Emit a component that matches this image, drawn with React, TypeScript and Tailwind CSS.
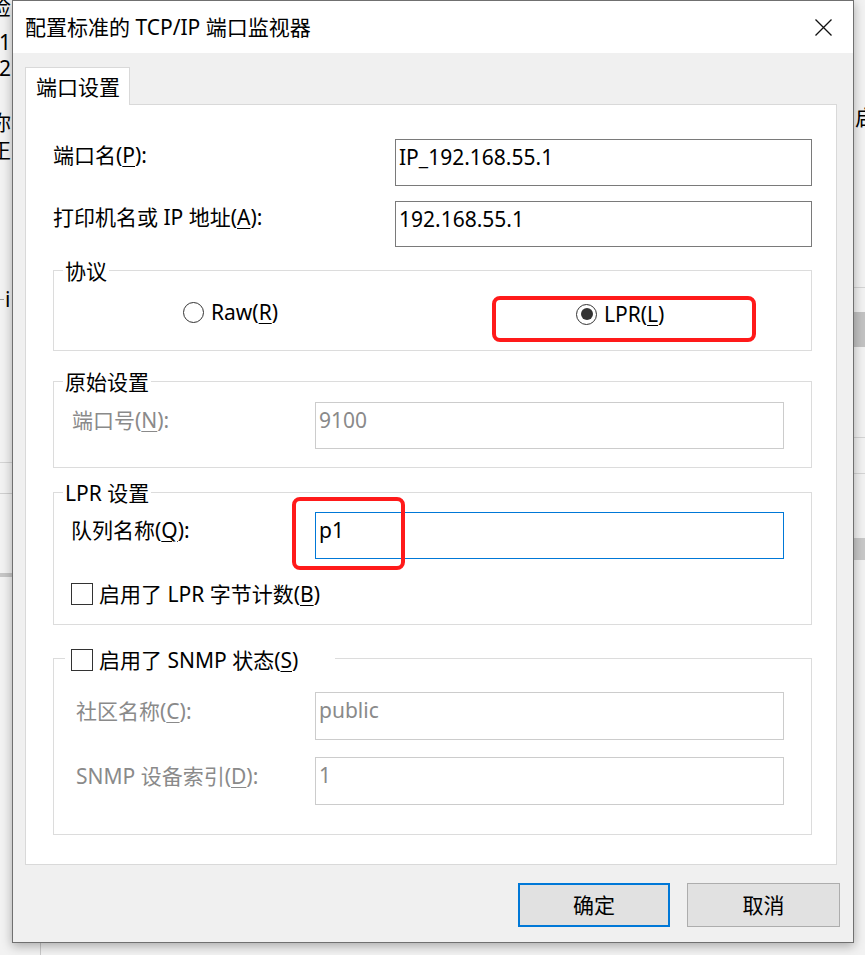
import React from "react";

function Radio({ checked }: { checked?: boolean }) {
  return (
    <span className="w-[21px] h-[21px] rounded-full border-[1.5px] border-[#333333] bg-white flex items-center justify-center shrink-0">
      {checked && <span className="w-[12px] h-[12px] rounded-full bg-[#333333]" />}
    </span>
  );
}

function Check() {
  return <span className="w-[22px] h-[22px] border-[1.5px] border-[#333333] bg-white shrink-0" />;
}

function U({ children }: { children: React.ReactNode }) {
  return <span className="underline decoration-1 underline-offset-[3px]">{children}</span>;
}

export default function App() {
  return (
    <div className="relative w-[865px] h-[955px] overflow-hidden bg-[#f2f2f2] font-['Noto_Sans','Noto_Sans_CJK_SC',sans-serif] text-[21px] leading-[30px] text-black">
      {/* background window fragments */}
      <span className="absolute left-[-10px] top-[-8px]">检</span>
      <span className="absolute left-[-1px] top-[27px]">1.</span>
      <span className="absolute left-[-1px] top-[53px]">2.</span>
      <span className="absolute left-[-10px] top-[107px]">你</span>
      <span className="absolute left-[-10px] top-[135px]">正</span>
      <span className="absolute left-[5px] top-[284px]">i</span>
      <span className="absolute left-0 top-[299px] w-[4px] h-px bg-[#9a9a9a]" />
      <span className="absolute left-0 top-[462px] w-[12px] h-px bg-[#d4d4d4]" />
      <span className="absolute left-0 top-[493px] w-[12px] h-px bg-[#cfcfcf]" />
      <span className="absolute left-0 top-[573px] w-[12px] h-[4px] bg-[#c6c6c6]" />
      <span className="absolute left-[855px] top-[102px]">启</span>
      <span className="absolute left-[854px] top-[287px] w-[11px] h-px bg-[#d4d4d4]" />
      <span className="absolute left-[854px] top-[312px] w-[11px] h-[35px] bg-[#c2c2c2]" />
      <span className="absolute left-[854px] top-[437px] w-[11px] h-px bg-[#d4d4d4]" />
      <span className="absolute left-[854px] top-[473px] w-[11px] h-px bg-[#d4d4d4]" />
      <span className="absolute left-[854px] top-[538px] w-[11px] h-[22px] bg-[#c8c8c8]" />
      <span className="absolute left-[40px] top-[943px] w-px h-[12px] bg-[#c8c8c8]" />

      {/* dialog window */}
      <div className="absolute left-[12px] top-0 w-[842px] h-[943px] border border-[#707070] bg-[#f0f0f0] shadow-[0_3px_10px_rgba(0,0,0,0.3)] flex flex-col">
        <div className="h-[52px] bg-white flex items-center justify-between pl-[12px] pr-[21px]">
          <span>配置标准的 TCP/IP 端口监视器</span>
          <svg width="17" height="17" viewBox="0 0 17 17">
            <path d="M0.5 0.5 L16.5 16.5 M16.5 0.5 L0.5 16.5" stroke="#111111" strokeWidth="1.3" />
          </svg>
        </div>

        <div className="flex flex-col pl-[12px] pt-[14px]">
          <div className="relative z-10 w-[105px] h-[38px] -mb-px bg-white border border-b-0 border-[#d9d9d9] flex items-center pl-[10px]">
            端口设置
          </div>
          <div className="w-[812px] h-[761px] bg-white border border-[#d9d9d9] pl-[27px] pr-[24px] pt-[34px] flex flex-col">
            {/* port name */}
            <div className="flex">
              <div className="w-[342px] mt-[1px]">
                端口名(<U>P</U>):
              </div>
              <div className="w-[417px] h-[47px] border border-[#7a7a7a] pl-[3px] pt-[2px]">IP_192.168.55.1</div>
            </div>
            {/* address */}
            <div className="flex mt-[15px]">
              <div className="w-[342px] mt-[1px]">
                打印机名或 IP 地址(<U>A</U>):
              </div>
              <div className="w-[417px] h-[46px] border border-[#7a7a7a] pl-[3px] pt-[2px]">192.168.55.1</div>
            </div>

            {/* protocol */}
            <div className="relative mt-[23px] h-[81px] border border-[#dcdcdc]">
              <span className="absolute left-[9px] -top-[15px] bg-white px-[2px]">协议</span>
              <div className="flex pl-[129px] pt-[24px]">
                <div className="w-[393px] flex items-center gap-[7px]">
                  <Radio />
                  <span>
                    Raw(<U>R</U>)
                  </span>
                </div>
                <div className="flex items-center gap-[7px] mt-[4px]">
                  <Radio checked />
                  <span>
                    LPR(<U>L</U>)
                  </span>
                </div>
              </div>
              <div className="absolute left-[438px] top-[25px] w-[264px] h-[46px] border-[4px] border-[#ff1a1a] rounded-[8px]" />
            </div>

            {/* raw settings */}
            <div className="relative mt-[30px] h-[87px] border border-[#dcdcdc]">
              <span className="absolute left-[9px] -top-[15px] bg-white px-[2px]">原始设置</span>
              <div className="flex pl-[18px] pt-[20px]">
                <div className="w-[243px] mt-[3px] text-[#8a8a8a]">
                  端口号(<U>N</U>):
                </div>
                <div className="w-[469px] h-[47px] border border-[#cccccc] pl-[3px] pt-[2px] text-[#8a8a8a]">9100</div>
              </div>
            </div>

            {/* LPR settings */}
            <div className="relative mt-[24px] h-[133px] border border-[#dcdcdc]">
              <span className="absolute left-[9px] -top-[15px] bg-white px-[2px]">LPR 设置</span>
              <div className="flex pl-[17px] pt-[19px]">
                <div className="w-[244px] mt-[3px]">
                  队列名称(<U>Q</U>):
                </div>
                <div className="w-[469px] h-[47px] border border-[#0078d7] pl-[3px] pt-[2px]">p1</div>
              </div>
              <div className="flex items-center h-[30px] mt-[20px] pl-[17px] gap-[6px]">
                <Check />
                <span>
                  启用了 LPR 字节计数(<U>B</U>)
                </span>
              </div>
              <div className="absolute left-[238px] top-[4px] w-[113px] h-[73px] border-[4px] border-[#ff1a1a] rounded-[8px]" />
            </div>

            {/* SNMP */}
            <div className="relative mt-[33px] h-[177px] border border-[#dcdcdc]">
              <div className="absolute left-[11px] -top-[14px] w-[270px] h-[30px] bg-white flex items-center pl-[6px] gap-[6px]">
                <Check />
                <span>
                  启用了 SNMP 状态(<U>S</U>)
                </span>
              </div>
              <div className="flex pl-[22px] pt-[33px]">
                <div className="w-[239px] mt-[4px] text-[#8a8a8a]">
                  社区名称(<U>C</U>):
                </div>
                <div className="w-[469px] h-[48px] border border-[#cccccc] pl-[3px] pt-[2px] text-[#8a8a8a]">public</div>
              </div>
              <div className="flex pl-[22px] mt-[17px]">
                <div className="w-[239px] mt-[4px] text-[#8a8a8a]">
                  SNMP 设备索引(<U>D</U>):
                </div>
                <div className="w-[469px] h-[48px] border border-[#cccccc] pl-[3px] pt-[2px] text-[#8a8a8a]">1</div>
              </div>
            </div>
          </div>

          {/* buttons */}
          <div className="flex justify-end gap-[17px] pr-[13px] mt-[18px]">
            <div className="w-[152px] h-[44px] border-2 border-[#0078d7] bg-[#e1e1e1] flex items-center justify-center">确定</div>
            <div className="w-[153px] h-[44px] border border-[#adadad] bg-[#e1e1e1] flex items-center justify-center">取消</div>
          </div>
        </div>
      </div>
    </div>
  );
}
